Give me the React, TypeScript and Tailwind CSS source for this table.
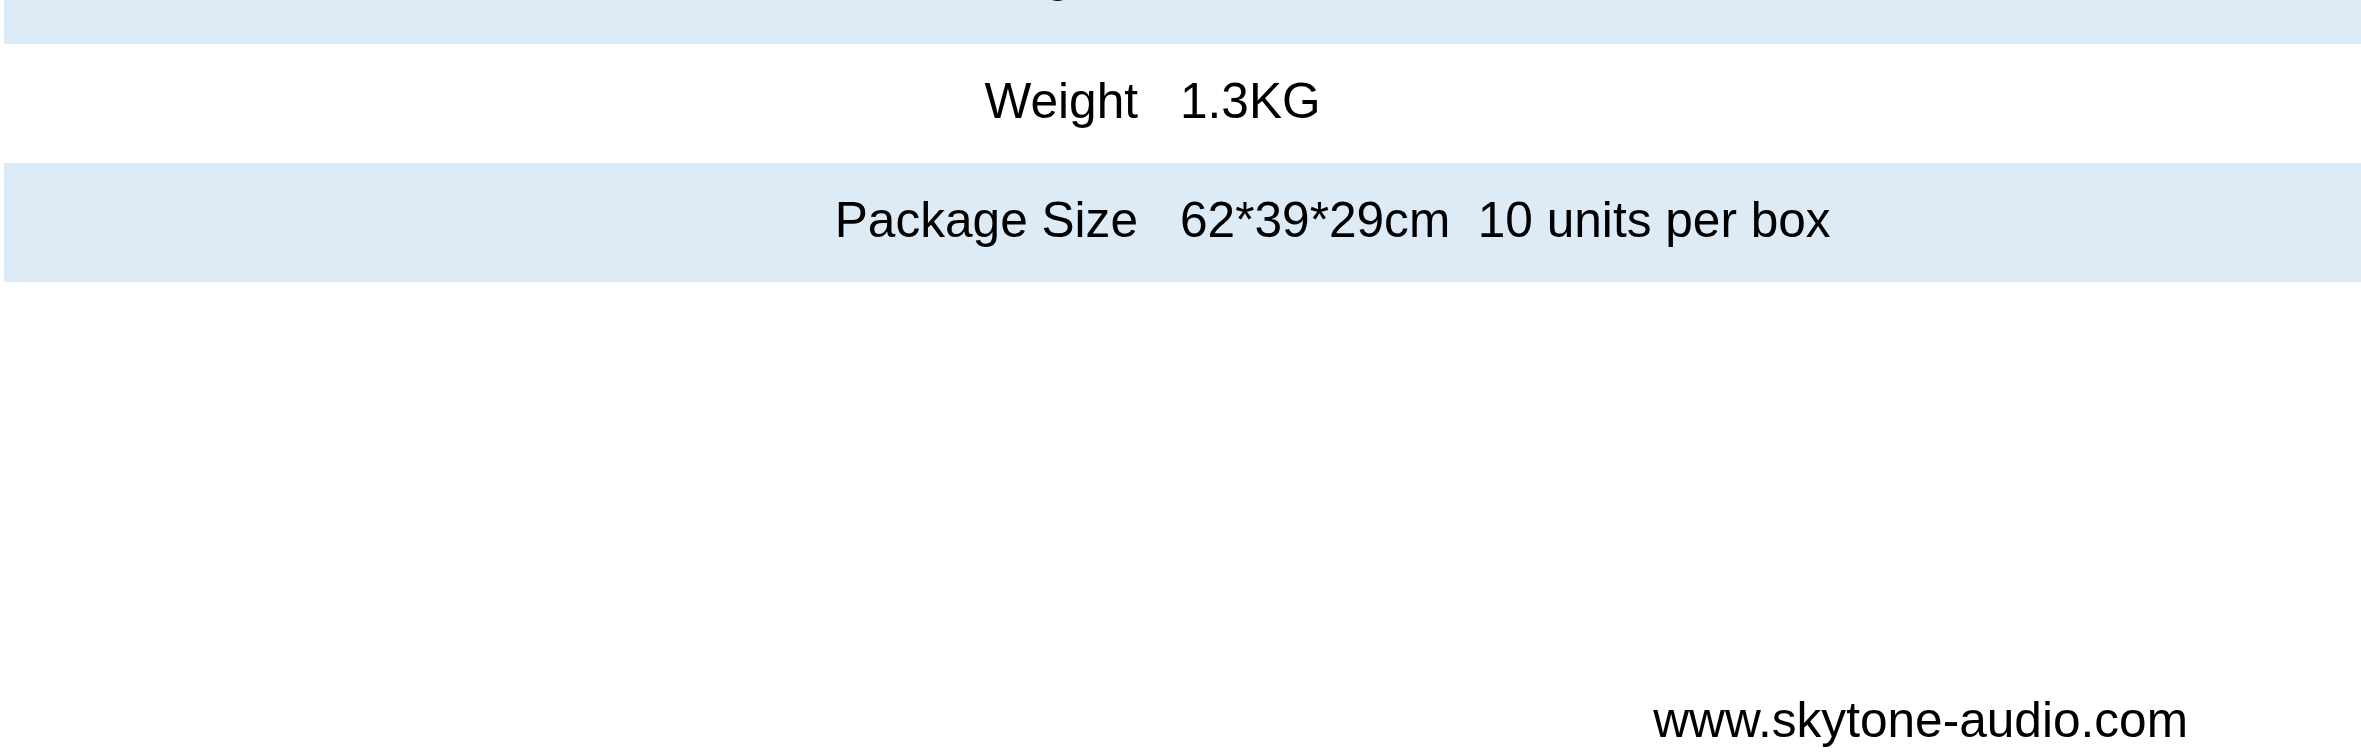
const SPECS = [
  { label: 'Weight', value: '1.3KG', shaded: false },
  { label: 'Package Size', value: '62*39*29cm  10 units per box', shaded: true },
];

function SpecRow({ label, value, shaded }: { label: string; value: string; shaded: boolean }) {
  return (
    <div className={`flex h-[119px] items-center pb-[3px] ${shaded ? 'bg-[#ddebf7]' : 'bg-white'}`}>
      <div className="w-[1134px] text-right">{label}</div>
      <div className="pl-[42px] whitespace-pre">{value}</div>
    </div>
  );
}

export default function App() {
  return (
    <div
      className="w-[2361px] h-[755px] overflow-hidden bg-white pl-[4px] text-black text-[49.6px] leading-none"
      style={{ fontFamily: '"Liberation Sans", Arial, sans-serif' }}
    >
      {/* tail of the row above, only its descenders show */}
      <div className="flex h-[44px] overflow-hidden bg-[#ddebf7]">
        <div className="w-[1134px] text-right -mt-[50px]">Signal</div>
      </div>

      {SPECS.map(row => (
        <SpecRow key={row.label} {...row} />
      ))}

      {/* FOOTER URL */}
      <div className="flex justify-end pr-[173px] mt-[414px]">
        <span>www.skytone-audio.com</span>
      </div>
    </div>
  );
}
